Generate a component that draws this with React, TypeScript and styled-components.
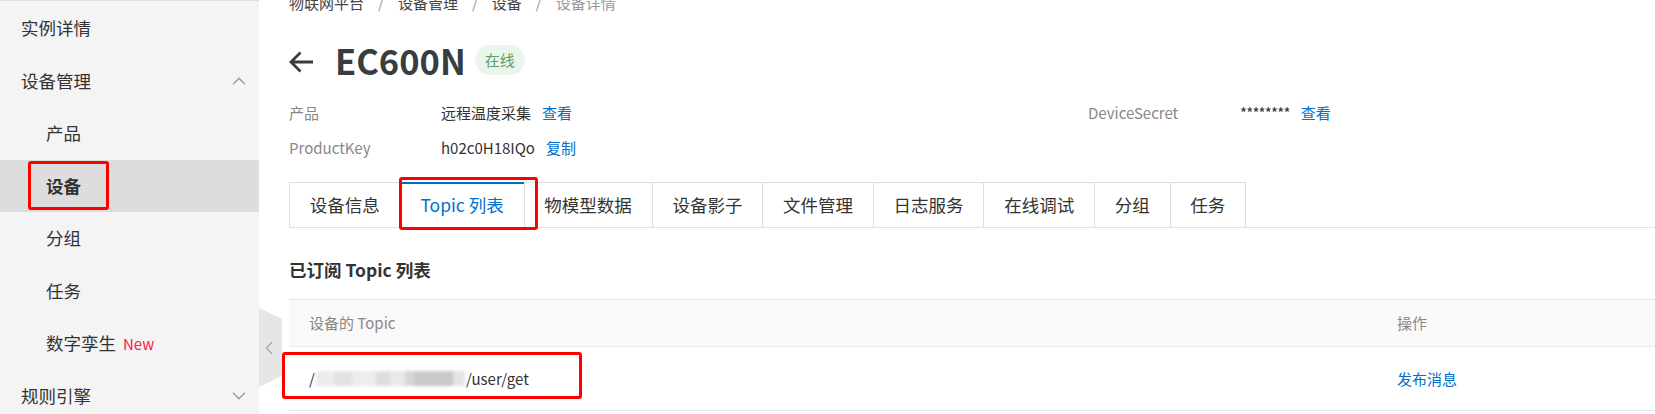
import React from "react";
import styled, { createGlobalStyle } from "styled-components";

const GlobalStyle = createGlobalStyle`
  html, body { margin: 0; padding: 0; background: #fff; }
  body {
    width: 1655px;
    height: 414px;
    overflow: hidden;
    font-family: "Noto Sans CJK SC", "Noto Sans", sans-serif;
    color: #333;
  }
  * { box-sizing: border-box; }
`;

const Page = styled.div`
  display: flex;
  height: 414px;
  overflow: hidden;
`;

/* ---------- Sidebar ---------- */
const Sidebar = styled.nav`
  flex: 0 0 259px;
  background: #f4f4f4;
  border-top: 1px solid #e0e0e0;
  padding-top: 1px;
`;

const MenuItem = styled.div<{ $sub?: boolean; $active?: boolean }>`
  position: relative;
  height: 52.5px;
  display: flex;
  align-items: center;
  justify-content: space-between;
  padding: 0 13px 0 ${(p) => (p.$sub ? 46 : 21)}px;
  font-size: 17.5px;
  line-height: 24px;
  color: #333;
  background: ${(p) => (p.$active ? "#dddddd" : "transparent")};
  font-weight: ${(p) => (p.$active ? 700 : 400)};
`;

const NewTag = styled.span`
  margin-left: 7px;
  font-size: 15px;
  color: #f72345;
`;

const Highlight = styled.span<{ $top: number; $left: number; $w: number; $h: number }>`
  position: absolute;
  top: ${(p) => p.$top}px;
  left: ${(p) => p.$left}px;
  width: ${(p) => p.$w}px;
  height: ${(p) => p.$h}px;
  border: 3px solid #ff0000;
  border-radius: 3px;
  pointer-events: none;
  z-index: 2;
`;

const Chevron = ({ dir }: { dir: "up" | "down" }) => (
  <svg width="14" height="8" viewBox="0 0 14 8">
    <path
      d={dir === "up" ? "M1 7.2L7 1.2l6 6" : "M1 0.8l6 6 6-6"}
      fill="none"
      stroke="#9a9a9a"
      strokeWidth="1.3"
    />
  </svg>
);

/* ---------- Main ---------- */
const Main = styled.main`
  position: relative;
  flex: 1;
  min-width: 0;
  overflow: hidden;
  padding-left: 30px;
`;

const Content = styled.div`
  width: 1600px;
`;

const Breadcrumb = styled.div`
  display: flex;
  margin-top: -8px;
  font-size: 15px;
  line-height: 22px;
  color: #444;
`;

const Crumb = styled.span<{ $current?: boolean }>`
  color: ${(p) => (p.$current ? "#999" : "#444")};
`;

const Sep = styled.span`
  padding: 0 14px;
  color: #999;
`;

const TitleRow = styled.div`
  display: flex;
  align-items: center;
  height: 44px;
  margin-top: 24px;
`;

const BackIcon = styled.svg`
  margin-top: 4px;
  flex: none;
`;

const Title = styled.h1`
  margin: 0 0 0 21px;
  font-size: 34.5px;
  font-weight: 700;
  line-height: 44px;
  color: #373d41;
`;

const Badge = styled.span`
  margin-left: 9px;
  height: 30px;
  padding: 0 10px;
  border-radius: 15px;
  background: #eaf5eb;
  color: #5c9c69;
  font-size: 15px;
  line-height: 30px;
`;

const InfoGrid = styled.div`
  display: grid;
  grid-template-columns: 152px 647px 152px 647px;
  grid-auto-rows: 35px;
  align-items: center;
  margin-top: 13.5px;
  font-size: 15px;
  line-height: 22px;
`;

const Label = styled.span`
  color: #888;
`;

const Value = styled.span`
  display: flex;
  gap: 11px;
  color: #333;
`;

const Secret = styled.span`
  letter-spacing: -0.8px;
`;

const Link = styled.span`
  color: #0070cc;
  cursor: pointer;
`;

const TabsWrap = styled.div`
  margin-top: 16.5px;
  border-bottom: 1px solid #e2e2e2;
`;

const TabList = styled.div`
  display: flex;
  width: max-content;
  border-left: 1px solid #ddd;
  border-top: 1px solid #ddd;
`;

const Tab = styled.div<{ $active?: boolean }>`
  position: relative;
  height: 44px;
  padding: 0 19.8px;
  border-right: 1px solid #ddd;
  font-size: 17.5px;
  line-height: 44px;
  color: ${(p) => (p.$active ? "#0070cc" : "#333")};
  background: #fff;
  &::before {
    content: "";
    display: ${(p) => (p.$active ? "block" : "none")};
    position: absolute;
    left: 0;
    right: 0;
    top: -1px;
    height: 2px;
    background: #0070cc;
  }
`;

const SectionTitle = styled.h2`
  margin: 29px 0 16px;
  font-size: 17.5px;
  font-weight: 700;
  line-height: 26px;
  color: #333;
`;

const Table = styled.div`
  border-top: 1px solid #e8e8e8;
`;

const TableRow = styled.div<{ $head?: boolean }>`
  position: relative;
  display: grid;
  grid-template-columns: 1088px 1fr;
  align-items: center;
  height: ${(p) => (p.$head ? 47 : 64)}px;
  border-bottom: 1px solid #e8e8e8;
  background: ${(p) => (p.$head ? "#f9f9f9" : "#fff")};
  font-size: 15px;
  line-height: 22px;
  color: ${(p) => (p.$head ? "#888" : "#333")};
`;

const Cell = styled.div`
  padding-left: 20px;
  display: flex;
  align-items: center;
`;

const Masked = styled.span`
  display: inline-block;
  width: 149px;
  height: 15px;
  margin: 0 1px;
  background: linear-gradient(
    90deg,
    #ececec 0 12%,
    #e2e2e2 12% 24%,
    #ededed 24% 40%,
    #dedede 40% 50%,
    #e9e9e9 50% 60%,
    #d6d6d6 60% 66%,
    #c9c9c9 66% 92%,
    #e4e4e4 92% 100%
  );
  filter: blur(1.5px);
`;

const CollapseHandle = styled.div`
  position: absolute;
  left: 0;
  top: 308px;
  width: 23px;
  height: 79px;
  background: #e6e6e6;
  clip-path: polygon(0 0, 100% 14%, 100% 86%, 0 100%);
  display: flex;
  align-items: center;
  padding-left: 6px;
`;

const tabs = ["设备信息", "Topic 列表", "物模型数据", "设备影子", "文件管理", "日志服务", "在线调试", "分组", "任务"];

export default function App() {
  return (
    <>
      <GlobalStyle />
      <Page>
        <Sidebar>
          <MenuItem>实例详情</MenuItem>
          <MenuItem>
            设备管理
            <Chevron dir="up" />
          </MenuItem>
          <MenuItem $sub>产品</MenuItem>
          <MenuItem $sub $active>
            设备
            <Highlight $top={1.5} $left={28} $w={81} $h={49} />
          </MenuItem>
          <MenuItem $sub>分组</MenuItem>
          <MenuItem $sub>任务</MenuItem>
          <MenuItem $sub>
            <span>
              数字孪生<NewTag>New</NewTag>
            </span>
          </MenuItem>
          <MenuItem>
            规则引擎
            <Chevron dir="down" />
          </MenuItem>
        </Sidebar>

        <Main>
          <Content>
            <Breadcrumb>
              <Crumb>物联网平台</Crumb>
              <Sep>/</Sep>
              <Crumb>设备管理</Crumb>
              <Sep>/</Sep>
              <Crumb>设备</Crumb>
              <Sep>/</Sep>
              <Crumb $current>设备详情</Crumb>
            </Breadcrumb>

            <TitleRow>
              <BackIcon width="25" height="22" viewBox="0 0 25 22">
                <path
                  d="M24 11H2.5M11.5 1.5L2 11l9.5 9.5"
                  fill="none"
                  stroke="#373d41"
                  strokeWidth="2.8"
                />
              </BackIcon>
              <Title>EC600N</Title>
              <Badge>在线</Badge>
            </TitleRow>

            <InfoGrid>
              <Label>产品</Label>
              <Value>
                远程温度采集<Link>查看</Link>
              </Value>
              <Label>DeviceSecret</Label>
              <Value>
                <Secret>********</Secret>
                <Link>查看</Link>
              </Value>
              <Label>ProductKey</Label>
              <Value>
                h02c0H18IQo<Link>复制</Link>
              </Value>
            </InfoGrid>

            <TabsWrap>
              <TabList>
                {tabs.map((t, i) => (
                  <Tab key={t} $active={i === 1}>
                    {t}
                    {i === 1 && <Highlight $top={-6} $left={-2} $w={139} $h={53} />}
                  </Tab>
                ))}
              </TabList>
            </TabsWrap>

            <SectionTitle>已订阅 Topic 列表</SectionTitle>

            <Table>
              <TableRow $head>
                <Cell>设备的 Topic</Cell>
                <Cell>操作</Cell>
              </TableRow>
              <TableRow>
                <Cell>
                  /<Masked />/user/get
                </Cell>
                <Cell>
                  <Link>发布消息</Link>
                </Cell>
                <Highlight $top={5} $left={-7} $w={300} $h={47} />
              </TableRow>
            </Table>
          </Content>

          <CollapseHandle>
            <svg width="8" height="14" viewBox="0 0 8 14">
              <path d="M7 1L1.5 7 7 13" fill="none" stroke="#a8a8a8" strokeWidth="1.3" />
            </svg>
          </CollapseHandle>
        </Main>
      </Page>
    </>
  );
}
